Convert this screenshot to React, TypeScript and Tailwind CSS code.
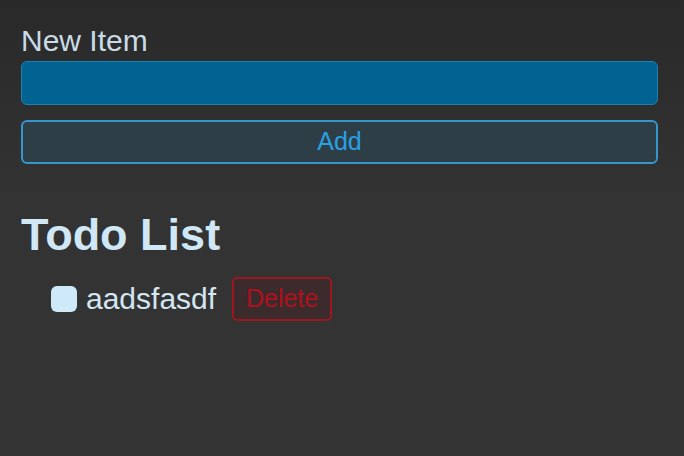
import { useState } from "react";

export default function App() {
  const [text, setText] = useState("");
  const [items, setItems] = useState([{ id: 1, label: "aadsfasdf", done: false }]);

  const add = () => {
    if (!text.trim()) return;
    setItems([...items, { id: Date.now(), label: text, done: false }]);
    setText("");
  };

  return (
    <div
      className="h-[456px] w-[684px] overflow-hidden bg-gradient-to-b from-[#292929] to-[#333333] to-[45%] pl-[21px] pr-[26px] pt-[24px]"
      style={{ fontFamily: '"Liberation Sans", Arial, sans-serif' }}
    >
      {/* Form */}
      <label className="block text-[30px] leading-[34px] text-[#c9dbe6]">New Item</label>
      <input
        value={text}
        onChange={(e) => setText(e.target.value)}
        className="mt-[3px] block h-[44px] w-full rounded-[6px] border border-[#1e7fb2] bg-[#006391] px-3 text-[24px] text-white outline-none"
      />
      <button
        onClick={add}
        className="mt-[15px] block h-[44px] w-full rounded-[6px] border-2 border-[#3496cc] bg-[#2d3e47] text-[25px] text-[#2aa0e4]"
      >
        Add
      </button>

      {/* List */}
      <h1 className="mt-[46px] text-[45px] font-bold leading-[50px] text-[#d0e7f5]">Todo List</h1>
      <ul className="mt-[17px] pl-[30px]">
        {items.map((item) => (
          <li key={item.id} className="flex items-center">
            <button
              onClick={() =>
                setItems(items.map((i) => (i.id === item.id ? { ...i, done: !i.done } : i)))
              }
              className="h-[26px] w-[26px] rounded-[6px] bg-[#cfe9f8]"
            />
            <span className="ml-[9px] text-[30px] leading-[34px] text-[#d3e6f2]">{item.label}</span>
            <button
              onClick={() => setItems(items.filter((i) => i.id !== item.id))}
              className="ml-[16px] h-[44px] w-[100px] rounded-[5px] border-2 border-[#9c1620] bg-[#3b2b2d] text-[25px] text-[#b0101e]"
            >
              Delete
            </button>
          </li>
        ))}
      </ul>
    </div>
  );
}
